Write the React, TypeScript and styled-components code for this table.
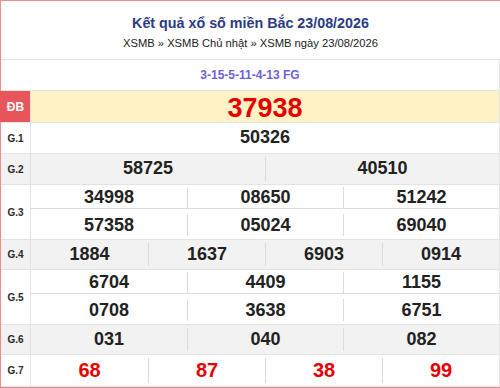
import styled, { createGlobalStyle } from "styled-components";

const GlobalStyle = createGlobalStyle`
  html, body {
    margin: 0;
    padding: 0;
    background: #fff;
    overflow: hidden;
  }
  body {
    font-family: "Liberation Sans", Arial, sans-serif;
  }
`;

// outer frame, right edge runs off the page in the shot
const Board = styled.div`
  width: 500px;
  box-sizing: border-box;
  border: 1px solid #f08c8c;
  border-right: none;
  background: #fff;
`;

const Header = styled.div`
  height: 45px;
  padding-top: 13px;
  border-bottom: 1px solid #e3e3e3;
  display: flex;
  flex-direction: column;
  align-items: center;
`;

const Title = styled.h1`
  margin: 0;
  font-size: 14.3px;
  line-height: 18px;
  font-weight: 700;
  color: #2b3b82;
`;

const Crumbs = styled.div`
  margin-top: 4px;
  font-size: 11.2px;
  line-height: 14px;
  color: #222;
`;

const CodeRow = styled.div`
  height: 30px;
  border-bottom: 1px solid #e3e3e3;
  border-right: 1px solid #e3e3e3;
  display: flex;
  align-items: center;
  justify-content: center;
  font-size: 12px;
  font-weight: 700;
  color: #6d5fdc;
`;

const Row = styled.div<{ $h: number; $bg?: string }>`
  display: flex;
  height: ${(p) => p.$h}px;
  border-bottom: 1px solid #e3e3e3;
  background: ${(p) => p.$bg ?? "#fff"};
`;

const Label = styled.div<{ $special?: boolean }>`
  width: 29px;
  flex: none;
  border-right: 1px solid #e3e3e3;
  display: flex;
  align-items: center;
  justify-content: center;
  font-weight: 700;
  font-size: ${(p) => (p.$special ? 12 : 10)}px;
  color: ${(p) => (p.$special ? "#fff" : "#2a2a2a")};
  background: ${(p) => (p.$special ? "#e8565b" : "transparent")};
  margin-left: ${(p) => (p.$special ? -1 : 0)}px;
  padding-left: ${(p) => (p.$special ? 1 : 0)}px;
`;

const Prizes = styled.div<{ $bg?: string }>`
  flex: 1;
  display: flex;
  flex-direction: column;
  justify-content: center;
  border-right: 1px solid #e3e3e3;
  background: ${(p) => p.$bg ?? "transparent"};
  padding: 2px 0 3px;
`;

const Line = styled.div<{ $cols: number; $h: number; $split?: boolean }>`
  display: grid;
  grid-template-columns: repeat(${(p) => p.$cols}, 1fr);
  height: ${(p) => p.$h}px;
  border-bottom: ${(p) => (p.$split ? "1px solid #dcdcdc" : "none")};
  & + & {
    margin-top: 5px;
  }
`;

const Num = styled.div<{ $size?: number; $red?: boolean }>`
  display: flex;
  align-items: center;
  justify-content: center;
  font-weight: 700;
  font-size: ${(p) => p.$size ?? 18}px;
  color: ${(p) => (p.$red ? "#e60000" : "#222")};
  & + & {
    border-left: 1px solid #dcdcdc;
  }
`;

type Prize = {
  label: string;
  lines: string[][];
  h: number;
  bg?: string;
  size?: number;
  red?: boolean;
};

const prizes: Prize[] = [
  { label: "G.1", lines: [["50326"]], h: 30 },
  { label: "G.2", lines: [["58725", "40510"]], h: 30, bg: "#f2f2f2" },
  {
    label: "G.3",
    lines: [
      ["34998", "08650", "51242"],
      ["57358", "05024", "69040"],
    ],
    h: 54,
  },
  { label: "G.4", lines: [["1884", "1637", "6903", "0914"]], h: 29, bg: "#f2f2f2" },
  {
    label: "G.5",
    lines: [
      ["6704", "4409", "1155"],
      ["0708", "3638", "6751"],
    ],
    h: 54,
  },
  { label: "G.6", lines: [["031", "040", "082"]], h: 29, bg: "#f2f2f2" },
  { label: "G.7", lines: [["68", "87", "38", "99"]], h: 31, size: 20, red: true },
];

export default function App() {
  return (
    <>
      <GlobalStyle />
      <Board>
        <Header>
          <Title>Kết quả xổ số miền Bắc 23/08/2026</Title>
          <Crumbs>XSMB » XSMB Chủ nhật » XSMB ngày 23/08/2026</Crumbs>
        </Header>

        <CodeRow>3-15-5-11-4-13 FG</CodeRow>

        <Row $h={31}>
          <Label $special>ĐB</Label>
          <Prizes $bg="#fff3c6">
            <Line $cols={1} $h={26}>
              <Num $size={27} $red>
                37938
              </Num>
            </Line>
          </Prizes>
        </Row>

        {prizes.map((p) => {
          const double = p.lines.length > 1;
          return (
            <Row key={p.label} $h={p.h} $bg={p.bg}>
              <Label>{p.label}</Label>
              <Prizes>
                {p.lines.map((nums, i) => (
                  <Line
                    key={i}
                    $cols={nums.length}
                    $h={double ? (i === 0 ? 21 : 22) : p.h - 6}
                    $split={double && i === 0}
                  >
                    {nums.map((n, j) => (
                      <Num key={j} $size={p.size} $red={p.red}>
                        {n}
                      </Num>
                    ))}
                  </Line>
                ))}
              </Prizes>
            </Row>
          );
        })}
      </Board>
    </>
  );
}
